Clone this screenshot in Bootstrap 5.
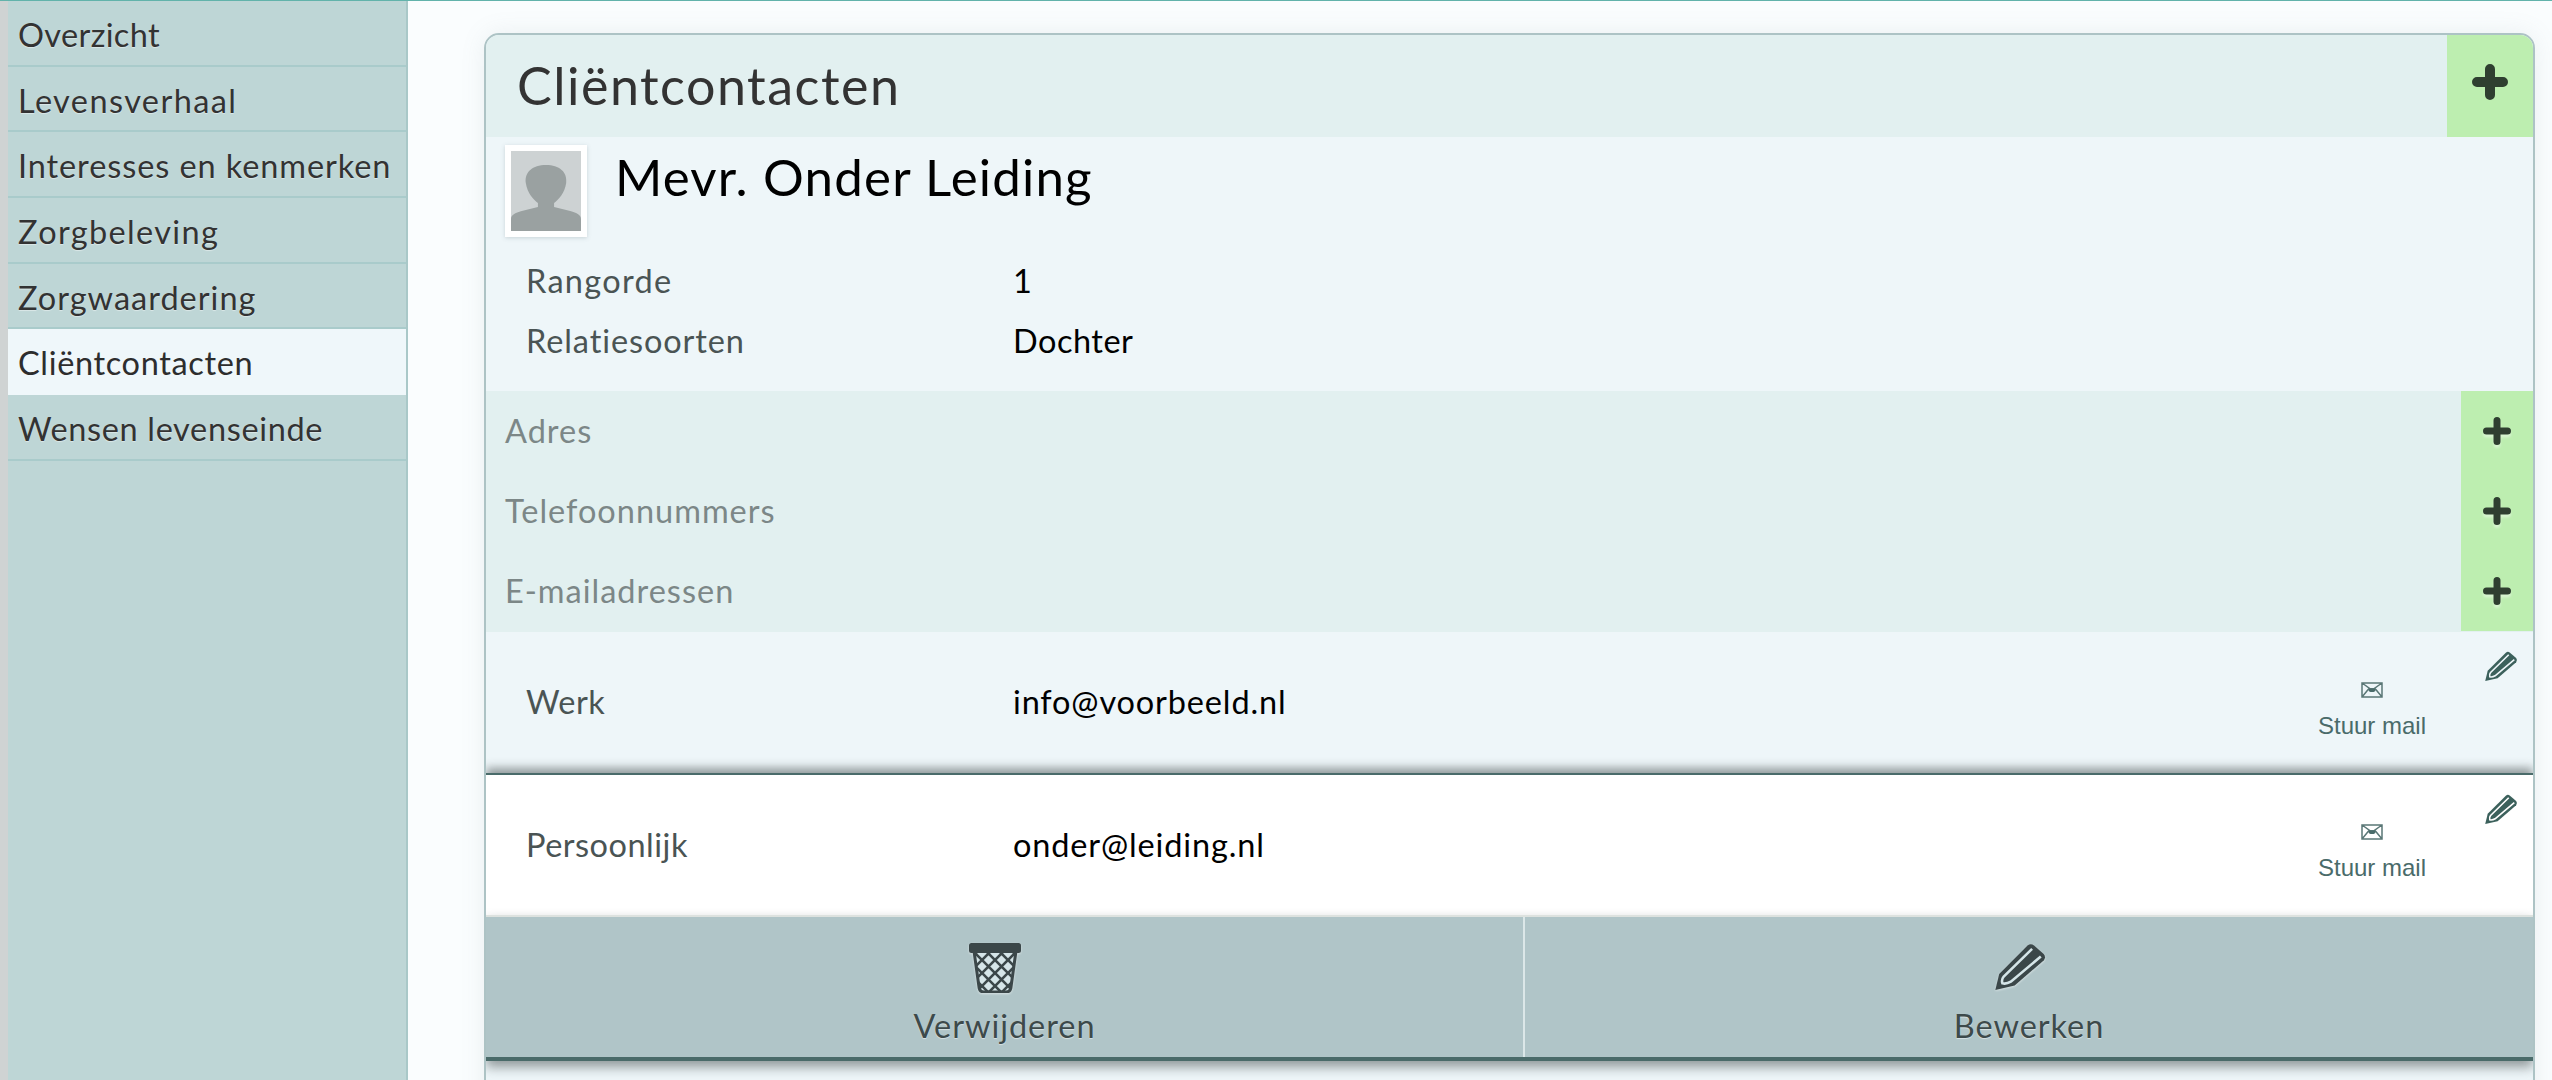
<!DOCTYPE html>
<html lang="nl">
<head>
<meta charset="utf-8">
<title>Cliëntcontacten</title>
<link rel="stylesheet" href="https://cdn.jsdelivr.net/npm/bootstrap@5.3.0/dist/css/bootstrap.min.css">
<style>
html,body{height:1080px;overflow:hidden;}
body{background:#fafdfe;font-family:"Lato","Noto Sans",sans-serif;color:#333;}
.shell{height:1080px;border-top:1px solid #62b3ab;}
.strip{width:8px;background:#cfd3d3;flex:none;}
.side{width:400px;flex:none;background:#bed6d6;border-right:2px solid #a9c8c8;}
.side-item{display:block;height:65.7px;line-height:68px;padding-left:10px;font-size:32.5px;letter-spacing:.55px;color:#333;text-decoration:none;border-bottom:2px solid #a9cbcb;white-space:nowrap;text-shadow:0 1px 1px rgba(255,255,255,.45);}
.side-item:nth-child(1){letter-spacing:.35px;}
.side-item:nth-child(2){letter-spacing:1.4px;}
.side-item:nth-child(3){letter-spacing:.9px;}
.side-item:nth-child(4){letter-spacing:1.35px;}
.side-item:nth-child(5){letter-spacing:1px;}
.side-item:nth-child(6){letter-spacing:.65px;}
.side-item:nth-child(7){letter-spacing:.65px;}
.side-item.on{background:#eff7fa;border-bottom-color:#eff7fa;text-shadow:none;color:#2d2d2d;}
.main-area{flex:1;padding:32px 17px 0 76px;min-width:0;}
.panel{height:1100px;background:#eef6f9;border:2px solid #adc3c5;border-radius:15px;box-shadow:0 0 24px rgba(120,140,150,.12);overflow:hidden;}
.panel-head{height:102px;background:#e2f0f0;}
.panel-head h1{font-size:52px;font-weight:400;letter-spacing:1.5px;margin:0 0 0 31px;color:#333;line-height:100px;}
.add-big{width:86px;background:#bdeeb0;}
.person{height:254px;}
.photo{width:82px;height:92px;background:#fff;padding:6px;box-shadow:0 1px 4px rgba(90,110,120,.25);margin:8px 0 0 19px;flex:none;}
.photo svg{display:block;width:70px;height:80px;}
.person h2{font-size:51px;font-weight:400;letter-spacing:1.2px;color:#000;margin:0 0 0 28px;line-height:80px;}
.fact{padding-left:40px;height:60px;font-size:32.5px;letter-spacing:.5px;}
.first-fact{margin-top:14px;}
.lab{width:487px;flex:none;color:#4a5454;}
.lab-wide{letter-spacing:.9px;}
.lab-mid{letter-spacing:1.3px;}
.val{color:#000;}
.val-mail{letter-spacing:.85px;}
.adds{height:241px;background:#e2f0f0;}
.add-row{height:80px;font-size:32.5px;letter-spacing:.5px;color:#7c8787;padding-left:19px;}
.add-row>span{letter-spacing:1px;}
.add-cell{width:72px;background:#bdeeb0;height:100%;}
.plus{filter:drop-shadow(0 3px 1px rgba(255,255,255,.4));}
.mail-row{height:141px;font-size:32.5px;letter-spacing:.5px;padding-left:40px;position:relative;}
.mail-row.white{background:#fff;border-top:2px solid #4a6b6a;box-shadow:0 -5px 9px rgba(30,40,40,.45);height:142px;}
.mail-act{width:130px;flex:none;margin-left:auto;text-align:center;font-family:"Liberation Sans",Arial,sans-serif;font-size:24px;letter-spacing:0;color:#4a6b6a;line-height:28px;padding-top:16px;}
.mail-act svg{display:block;margin:0 auto 14px;}
.edit-mini{width:34px;flex:none;margin:19px 15px 0 47px;align-self:flex-start;--core:#3c615c;--chan:#eef6f9;}
.white .edit-mini{--chan:#fff;}
.edit-mini svg{display:block;}
.foot-bar{height:146px;background:#b0c5c8;border-top:2px solid #dde2df;border-bottom:4px solid #4a6b6a;box-shadow:0 6px 11px rgba(30,40,40,.45);position:relative;}
.foot-btn{flex:1;height:100%;color:#3d4a4b;font-size:32.5px;letter-spacing:.95px;text-decoration:none;line-height:38px;padding-top:26px;text-shadow:0 1px 1px rgba(255,255,255,.5);--core:#3b4749;--chan:#d5e5e8;}
.foot-btn:first-child{border-right:2px solid #dbe7e8;width:1039px;flex:none;}
.foot-btn svg{display:block;margin:0 0 14px calc(50% - 36px);filter:drop-shadow(0 1px 1px rgba(255,255,255,.5));}
</style>
</head>
<body>
<svg width="0" height="0" class="position-absolute">
  <defs>
    <symbol id="ico-pen" viewBox="66 36 165 155">
      <path d="M72 182 L84 132 L172 44 Q182 36 192 44 L222 70 Q230 80 222 90 L132 168 Z" fill="var(--core)"/>
      <path d="M186 54 L98 140 Q90 150 94 161 Q106 164 120 156 L213 78" fill="none" stroke="var(--chan)" stroke-width="8"/>
    </symbol>
    <pattern id="lattice" width="13" height="13" patternUnits="userSpaceOnUse" patternTransform="translate(0 4)">
      <rect width="13" height="13" fill="#d5e5e8"/>
      <path d="M-2 -2L15 15M15 -2L-2 15" stroke="#3b4749" stroke-width="2.600"/>
    </pattern>
  </defs>
</svg>
<div class="shell d-flex">
  <div class="strip"></div>
  <nav class="side d-flex flex-column">
    <a class="side-item" href="#">Overzicht</a>
    <a class="side-item" href="#">Levensverhaal</a>
    <a class="side-item" href="#">Interesses en kenmerken</a>
    <a class="side-item" href="#">Zorgbeleving</a>
    <a class="side-item" href="#">Zorgwaardering</a>
    <a class="side-item on" href="#">Cliëntcontacten</a>
    <a class="side-item" href="#">Wensen levenseinde</a>
  </nav>
  <main class="main-area">
    <section class="panel">
      <header class="panel-head d-flex justify-content-between">
        <h1>Cliëntcontacten</h1>
        <a class="add-big d-flex align-items-center justify-content-center" href="#" aria-label="Toevoegen">
          <svg width="36" height="36" viewBox="0 0 36 36" class="mb-2"><path d="M18 5V31M5 18H31" stroke="#2f3f30" stroke-width="10" stroke-linecap="round"/></svg>
        </a>
      </header>
      <div class="person">
        <div class="d-flex">
          <div class="photo">
            <svg viewBox="0 0 52 80" preserveAspectRatio="none"><rect width="52" height="80" fill="#cdd2d3"/><path d="M26 14C36 14 42 21 41 32C40 42 35 49 32 52V56L44 60C49 62 52 64 52 68V80H0V68C0 64 3 62 8 60L20 56V52C17 49 12 42 11 32C10 21 16 14 26 14Z" fill="#9aa1a1"/></svg>
          </div>
          <h2>Mevr. Onder Leiding</h2>
        </div>
        <div class="fact first-fact d-flex align-items-center"><span class="lab lab-mid">Rangorde</span><span class="val">1</span></div>
        <div class="fact d-flex align-items-center"><span class="lab lab-wide">Relatiesoorten</span><span class="val">Dochter</span></div>
      </div>
      <div class="adds">
        <div class="add-row d-flex align-items-center justify-content-between"><span>Adres</span><a class="add-cell d-flex align-items-center justify-content-center" href="#" aria-label="Adres toevoegen"><svg class="plus" width="28" height="28" viewBox="0 0 28 28"><path d="M14 3.500V24.500M3.500 14H24.500" stroke="#2f3f30" stroke-width="7" stroke-linecap="round"/></svg></a></div>
        <div class="add-row d-flex align-items-center justify-content-between"><span>Telefoonnummers</span><a class="add-cell d-flex align-items-center justify-content-center" href="#" aria-label="Telefoonnummer toevoegen"><svg class="plus" width="28" height="28" viewBox="0 0 28 28"><path d="M14 3.500V24.500M3.500 14H24.500" stroke="#2f3f30" stroke-width="7" stroke-linecap="round"/></svg></a></div>
        <div class="add-row d-flex align-items-center justify-content-between"><span>E-mailadressen</span><a class="add-cell d-flex align-items-center justify-content-center" href="#" aria-label="E-mailadres toevoegen"><svg class="plus" width="28" height="28" viewBox="0 0 28 28"><path d="M14 3.500V24.500M3.500 14H24.500" stroke="#2f3f30" stroke-width="7" stroke-linecap="round"/></svg></a></div>
      </div>
      <div class="mail-row d-flex align-items-center">
        <span class="lab">Werk</span><span class="val val-mail">info@voorbeeld.nl</span>
        <a class="mail-act text-decoration-none" href="#"><svg width="22" height="16" viewBox="0 0 22 16"><path d="M1 1H21V15H1ZM1 1L11 8L21 1M1 15L8 6.500M21 15L14 6.500" fill="none" stroke="#5a7776" stroke-width="1.500"/><ellipse cx="11" cy="8" rx="3.500" ry="2" fill="#4a6b6a"/></svg>Stuur mail</a>
        <a class="edit-mini" href="#" aria-label="Bewerken"><svg width="34" height="32"><use href="#ico-pen"/></svg></a>
      </div>
      <div class="mail-row white d-flex align-items-center">
        <span class="lab">Persoonlijk</span><span class="val val-mail">onder@leiding.nl</span>
        <a class="mail-act text-decoration-none" href="#"><svg width="22" height="16" viewBox="0 0 22 16"><path d="M1 1H21V15H1ZM1 1L11 8L21 1M1 15L8 6.500M21 15L14 6.500" fill="none" stroke="#5a7776" stroke-width="1.500"/><ellipse cx="11" cy="8" rx="3.500" ry="2" fill="#4a6b6a"/></svg>Stuur mail</a>
        <a class="edit-mini" href="#" aria-label="Bewerken"><svg width="34" height="32"><use href="#ico-pen"/></svg></a>
      </div>
      <div class="foot-bar d-flex">
        <a class="foot-btn text-center" href="#">
          <svg width="52" height="50" viewBox="0 0 52 50"><path d="M5 8H47L42 44Q41.500 49 37 49H15Q10.500 49 10 44Z" fill="url(#lattice)" stroke="#3b4749" stroke-width="3"/><rect x="0" y="0" width="52" height="10" rx="2.500" fill="#3b4749"/></svg>
          Verwijderen
        </a>
        <a class="foot-btn text-center" href="#">
          <svg width="54" height="50"><use href="#ico-pen"/></svg>
          Bewerken
        </a>
      </div>
    </section>
  </main>
</div>
</body>
</html>
